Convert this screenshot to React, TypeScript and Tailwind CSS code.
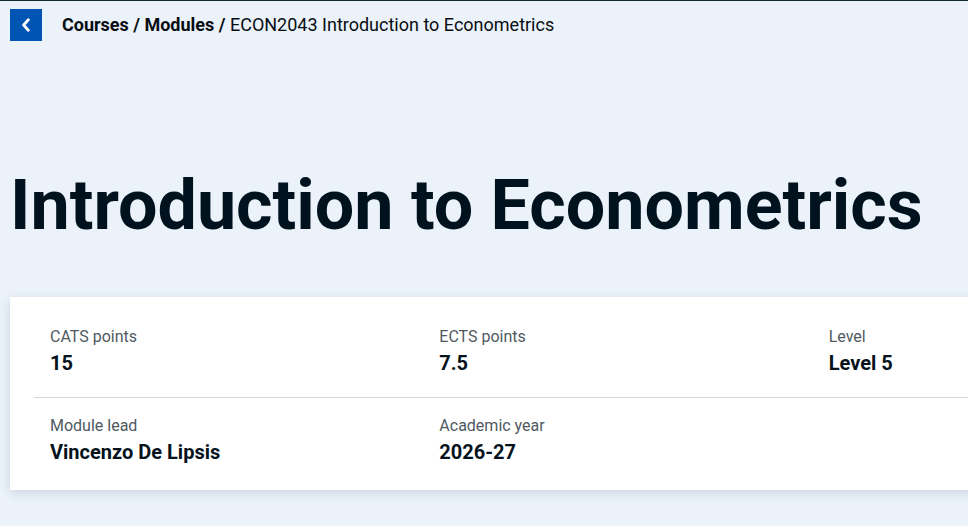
const facts = [
  [
    { label: 'CATS points', value: '15' },
    { label: 'ECTS points', value: '7.5' },
    { label: 'Level', value: 'Level 5' },
  ],
  [
    { label: 'Module lead', value: 'Vincenzo De Lipsis' },
    { label: 'Academic year', value: '2026-27' },
  ],
]

function Fact({ label, value }: { label: string; value: string }) {
  return (
    <div className="pl-4">
      <p className="text-[16px] leading-6 text-[#4f5962]">{label}</p>
      <p className="text-[20px] leading-7 font-bold text-[#06131c]">{value}</p>
    </div>
  )
}

export default function App() {
  return (
    <div
      className="h-[526px] w-full overflow-hidden bg-[#ebf2fa] border-t border-[#0f2b33]"
      style={{ fontFamily: 'Roboto, "Liberation Sans", sans-serif' }}
    >
      {/* Breadcrumb */}
      <div className="flex items-center gap-5 pl-[10px] pt-2">
        <button className="w-8 h-8 flex items-center justify-center bg-[#0054b4] text-white">
          <svg width="10" height="14" viewBox="0 0 10 14" fill="none">
            <path d="M7.3 1.8 L2.6 7 L7.3 12.2" stroke="white" strokeWidth="2.8" strokeLinecap="round" strokeLinejoin="round" />
          </svg>
        </button>
        <p className="text-[18px] leading-6 text-[#080d12]">
          <span className="font-bold">Courses / Modules / </span>
          ECON2043 Introduction to Econometrics
        </p>
      </div>

      {/* Title */}
      <h1 className="mt-[129px] pl-[10px] text-[70px] leading-[70px] font-bold text-[#00121e] whitespace-nowrap">
        Introduction to Econometrics
      </h1>

      {/* Facts card */}
      <div className="mt-[57px] ml-[10px] w-[1216px] bg-white px-6 shadow-[0_3px_10px_rgba(20,40,70,0.14)]">
        <div className="grid grid-cols-3 pt-[28px] pb-5">
          {facts[0].map(f => <Fact key={f.label} {...f} />)}
        </div>
        <div className="h-px bg-[#cdd5df]" />
        <div className="grid grid-cols-3 pt-4 pb-6">
          {facts[1].map(f => <Fact key={f.label} {...f} />)}
        </div>
      </div>
    </div>
  )
}
